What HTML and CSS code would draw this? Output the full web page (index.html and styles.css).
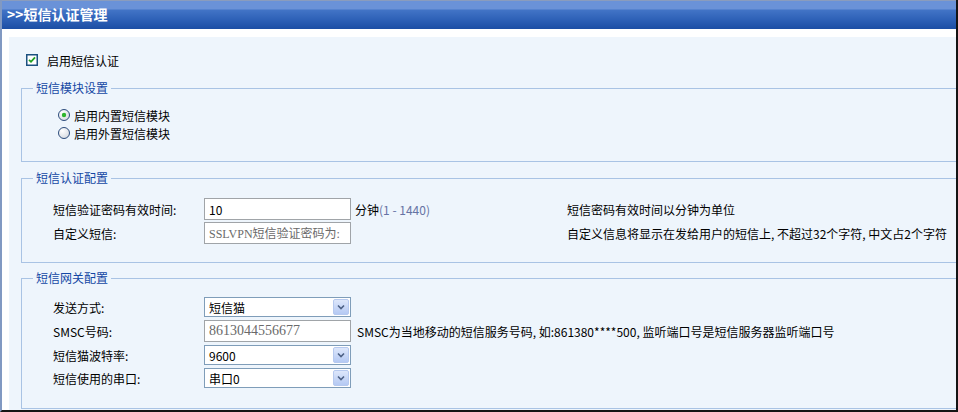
FILE: index.html
```html
<!DOCTYPE html>
<html lang="zh">
<head>
<meta charset="utf-8">
<title>短信认证管理</title>
<link rel="stylesheet" href="styles.css">
</head>
<body>
<div class="frame">
  <div class="header">&gt;&gt;短信认证管理</div>
  <div class="panel">
    <div class="check-row">
      <span class="checkbox"><svg width="12" height="12" viewBox="0 0 12 12"><rect x="0.75" y="0.75" width="10.5" height="10.5" fill="#fff" stroke="#1c5180" stroke-width="1.5"/><path d="M3 5.8 L5 7.8 L9 3.4" fill="none" stroke="#21a121" stroke-width="1.8"/></svg></span>
      <span>启用短信认证</span>
    </div>

    <fieldset class="group g1">
      <legend>短信模块设置</legend>
      <div class="inner1">
        <div class="radio-row">
          <svg class="radio" width="12" height="12" viewBox="0 0 12 12"><defs><radialGradient id="rg1" cx="0.35" cy="0.3" r="0.8"><stop offset="0" stop-color="#fff"/><stop offset="1" stop-color="#d4d8de"/></radialGradient></defs><circle cx="6" cy="6" r="5.5" fill="url(#rg1)" stroke="#2c4c7c"/><circle cx="6" cy="6" r="2.2" fill="#2db52d"/></svg>
          <span>启用内置短信模块</span>
        </div>
        <div class="radio-row">
          <svg class="radio" width="12" height="12" viewBox="0 0 12 12"><defs><radialGradient id="rg2" cx="0.35" cy="0.3" r="0.8"><stop offset="0" stop-color="#fff"/><stop offset="1" stop-color="#d4d8de"/></radialGradient></defs><circle cx="6" cy="6" r="5.5" fill="url(#rg2)" stroke="#2c4c7c"/></svg>
          <span>启用外置短信模块</span>
        </div>
      </div>
    </fieldset>

    <fieldset class="group g2">
      <legend>短信认证配置</legend>
      <div class="grid2">
        <div class="label">短信验证密码有效时间:</div>
        <div class="field input-box"><span class="val">10</span></div>
        <div class="unit">分钟<span class="range">(1 - 1440)</span></div>
        <div class="hint">短信密码有效时间以分钟为单位</div>

        <div class="label">自定义短信:</div>
        <div class="field input-box serif"><span class="val gray">SSLVPN短信验证密码为:</span></div>
        <div class="unit"></div>
        <div class="hint">自定义信息将显示在发给用户的短信上, 不超过32个字符, 中文占2个字符</div>
      </div>
    </fieldset>

    <fieldset class="group g3">
      <legend>短信网关配置</legend>
      <div class="grid3">
        <div class="label">发送方式:</div>
        <div class="field select-box"><span class="val">短信猫</span><span class="arrow"><svg width="16" height="16" viewBox="0 0 16 16"><defs><linearGradient id="ag1" x1="0" y1="0" x2="0" y2="1"><stop offset="0" stop-color="#dfe8fb"/><stop offset="1" stop-color="#b3c8f3"/></linearGradient></defs><rect x="0.5" y="0.5" width="15" height="15" rx="1.5" fill="url(#ag1)" stroke="#b6c9ef"/><path d="M5 6.5 L8 9.5 L11 6.5" fill="none" stroke="#4d6185" stroke-width="1.6"/></svg></span></div>
        <div class="hint3"></div>

        <div class="label">SMSC号码:</div>
        <div class="field input-box serif big"><span class="val gray">8613044556677</span></div>
        <div class="hint3">SMSC为当地移动的短信服务号码, 如:861380****500, 监听端口号是短信服务器监听端口号</div>

        <div class="label">短信猫波特率:</div>
        <div class="field select-box"><span class="val">9600</span><span class="arrow"><svg width="16" height="16" viewBox="0 0 16 16"><defs><linearGradient id="ag2" x1="0" y1="0" x2="0" y2="1"><stop offset="0" stop-color="#dfe8fb"/><stop offset="1" stop-color="#b3c8f3"/></linearGradient></defs><rect x="0.5" y="0.5" width="15" height="15" rx="1.5" fill="url(#ag2)" stroke="#b6c9ef"/><path d="M5 6.5 L8 9.5 L11 6.5" fill="none" stroke="#4d6185" stroke-width="1.6"/></svg></span></div>
        <div class="hint3"></div>

        <div class="label">短信使用的串口:</div>
        <div class="field select-box"><span class="val">串口0</span><span class="arrow"><svg width="16" height="16" viewBox="0 0 16 16"><defs><linearGradient id="ag3" x1="0" y1="0" x2="0" y2="1"><stop offset="0" stop-color="#dfe8fb"/><stop offset="1" stop-color="#b3c8f3"/></linearGradient></defs><rect x="0.5" y="0.5" width="15" height="15" rx="1.5" fill="url(#ag3)" stroke="#b6c9ef"/><path d="M5 6.5 L8 9.5 L11 6.5" fill="none" stroke="#4d6185" stroke-width="1.6"/></svg></span></div>
        <div class="hint3"></div>
      </div>
    </fieldset>
  </div>
</div>
</body>
</html>
```

FILE: styles.css
```css
html, body {
  margin: 0;
  padding: 0;
  background: #ffffff;
}
body {
  width: 958px;
  height: 412px;
  overflow: hidden;
  font-family: "Noto Sans CJK SC", "Liberation Sans", sans-serif;
  font-size: 12px;
  color: #000;
}
.frame {
  box-sizing: border-box;
  width: 958px;
  height: 412px;
  border-left: 2px solid #8199c2;
  border-right: 2px solid #141414;
  border-bottom: 2px solid #141414;
  background: #ffffff;
  display: flex;
  flex-direction: column;
  overflow: hidden;
}
.header {
  height: 29px;
  box-sizing: border-box;
  border-top: 1px solid #8a9cbd;
  background: linear-gradient(to bottom, #6a92d8 0px, #6a92d8 8px, #4274c6 9px, #2f62b8 18px, #1c4ea4 28px);
  color: #fff;
  font-weight: bold;
  font-size: 14px;
  line-height: 26px;
  padding-left: 5px;
  flex: none;
}
.panel {
  flex: 1;
  margin-top: 8px;
  margin-left: 7px;
  background: #eef5fc;
  padding: 15px 0 0 12px;
  overflow: hidden;
  min-height: 0;
}
.check-row {
  display: flex;
  align-items: center;
  height: 16px;
  padding-left: 5px;
}
.checkbox {
  display: inline-flex;
  width: 12px;
  height: 12px;
  margin-right: 9px;
}
.group {
  width: 1000px;
  margin: 0;
  border: 1px solid #a9c3e4;
  padding: 0;
  box-sizing: border-box;
}
.group legend {
  margin-left: 11px;
  padding: 0 3px;
  color: #1448a4;
  font-size: 12px;
  line-height: 16px;
}
.g1 {
  margin-top: 12px;
}
.inner1 {
  padding: 10px 0 19px 36px;
}
.radio-row {
  display: flex;
  align-items: center;
  height: 18px;
}
.radio {
  margin-right: 4px;
}
.g2 {
  margin-top: 8px;
}
.g3 {
  margin-top: 7px;
}
.grid2 {
  display: grid;
  grid-template-columns: 151px 147px 216px auto;
  grid-auto-rows: 22px;
  row-gap: 2px;
  align-items: center;
  padding: 12px 0 18px 31px;
}
.grid3 {
  display: grid;
  grid-template-columns: 151px 147px auto;
  grid-template-rows: 20px 22px 20px 20px;
  row-gap: 3px;
  align-items: center;
  padding: 11px 0 20px 31px;
}
.label {
  white-space: nowrap;
}
.field {
  box-sizing: border-box;
  height: 100%;
  display: flex;
  align-items: center;
  background: #fff;
  overflow: hidden;
}
.input-box {
  border: 1px solid #a0a4a8;
  padding-left: 4px;
}
.select-box {
  border: 1px solid #7f9db9;
  padding-left: 4px;
  justify-content: space-between;
}
.arrow {
  display: flex;
  width: 16px;
  height: 16px;
  margin-right: 1px;
}
.val {
  white-space: nowrap;
}
.serif .val {
  font-family: "Liberation Serif", "Noto Sans CJK SC", serif;
}
.big .val {
  font-size: 14px;
}
.gray {
  color: #6a6a6a;
}
.unit {
  padding-left: 4px;
  white-space: nowrap;
}
.range {
  color: #6673a4;
}
.hint {
  white-space: nowrap;
}
.hint3 {
  padding-left: 6px;
  white-space: nowrap;
}
```
